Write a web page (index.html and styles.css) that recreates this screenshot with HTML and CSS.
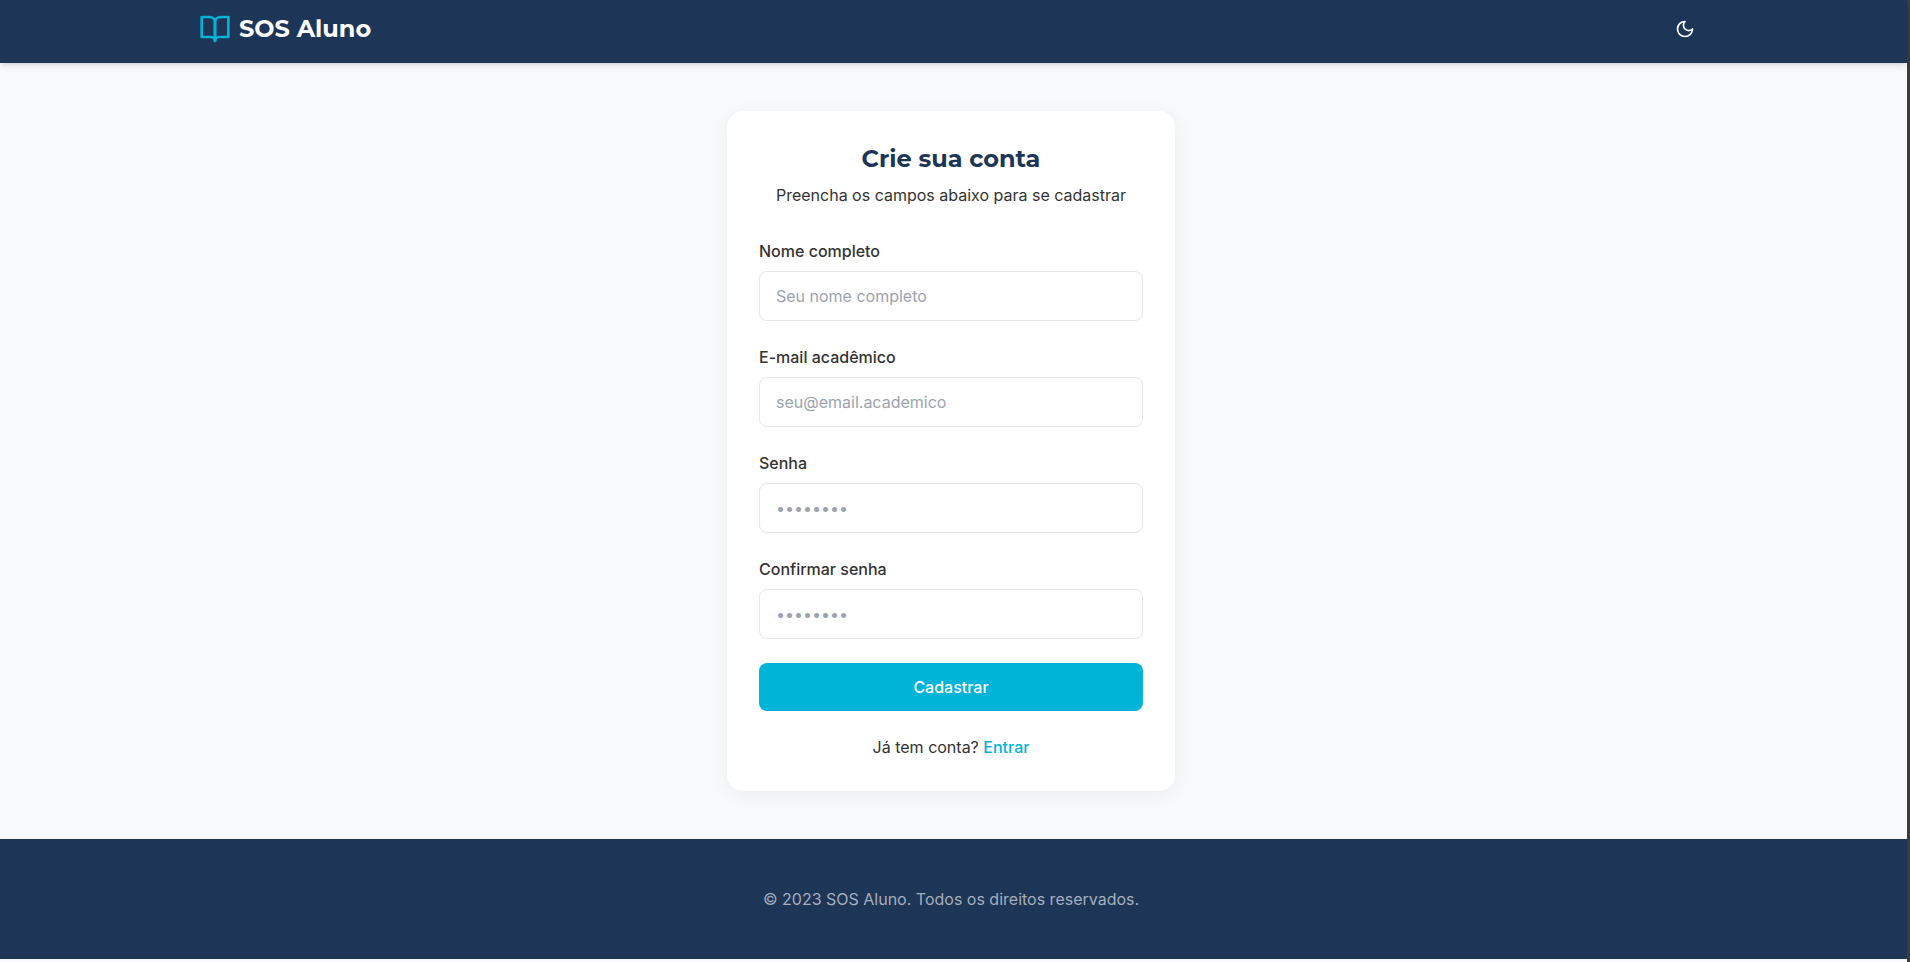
FILE: index.html
```html
<!DOCTYPE html>
<html lang="pt-BR">
<head>
<meta charset="utf-8">
<title>SOS Aluno</title>
<meta name="viewport" content="width=device-width, initial-scale=1">
<link rel="stylesheet" href="styles.css">
</head>
<body>
<div class="page">
  <header class="header">
    <div class="container">
      <a class="brand" href="#">
        <svg class="brand-icon" viewBox="0 0 24 24" fill="none" stroke="currentColor" stroke-width="2" stroke-linejoin="round" stroke-linecap="round" aria-hidden="true">
          <path d="M2 3h6a4 4 0 0 1 4 4v14a3 3 0 0 0-3-3H2z"/>
          <path d="M22 3h-6a4 4 0 0 0-4 4v14a3 3 0 0 1 3-3h7z"/>
        </svg>
        <span>SOS Aluno</span>
      </a>
      <button class="theme-toggle" type="button" aria-label="Alternar tema">
        <svg class="theme-icon" viewBox="0 0 24 24" fill="none" stroke="currentColor" stroke-width="2" stroke-linecap="round" stroke-linejoin="round" aria-hidden="true">
          <path d="M12 3a6 6 0 0 0 9 9 9 9 0 1 1-9-9Z"/>
        </svg>
      </button>
    </div>
  </header>
  <main class="main">
    <section class="card">
      <h1 class="title">Crie sua conta</h1>
      <p class="subtitle">Preencha os campos abaixo para se cadastrar</p>
      <form class="form">
        <div class="field">
          <label for="name">Nome completo</label>
          <input id="name" type="text" placeholder="Seu nome completo">
        </div>
        <div class="field">
          <label for="email">E-mail acadêmico</label>
          <input id="email" type="email" placeholder="seu@email.academico">
        </div>
        <div class="field">
          <label for="password">Senha</label>
          <input id="password" type="password" placeholder="••••••••">
        </div>
        <div class="field">
          <label for="confirm">Confirmar senha</label>
          <input id="confirm" type="password" placeholder="••••••••">
        </div>
        <button class="submit" type="submit">Cadastrar</button>
      </form>
      <p class="signin">Já tem conta? <a href="#">Entrar</a></p>
    </section>
  </main>
  <footer class="footer">
    <p>© 2023 SOS Aluno. Todos os direitos reservados.</p>
  </footer>
</div>
</body>
</html>
```
FILE: styles.css
```css
*, *::before, *::after { box-sizing: border-box; }
h1, p { margin: 0; }

body {
  margin: 0;
  background: #f8f9fb;
  color: #333;
  font: 16px/24px Inter, "Noto Sans", sans-serif;
}

.page {
  display: flex;
  flex-direction: column;
  min-height: 100vh;
  padding-bottom: 3px;
  border-right: 3px solid #3b3b3b;
}

.header {
  position: relative;
  padding: 9px 5px 14px 0;
  background: #1d3557;
  color: #fff;
  box-shadow: 0 4px 6px -1px rgba(0, 0, 0, .1), 0 2px 4px -2px rgba(0, 0, 0, .1);
}

.container {
  display: flex;
  align-items: center;
  justify-content: space-between;
  max-width: 1536px;
  height: 40px;
  margin: 0 auto;
  padding: 0 16px;
}

.brand {
  display: flex;
  align-items: center;
  gap: 8px;
  color: #fff;
  font: 700 24px/32px Montserrat, Inter, sans-serif;
  text-decoration: none;
}
.brand-icon { width: 32px; height: 32px; color: #00b4d8; }

.theme-toggle {
  display: flex;
  padding: 8px;
  border: 0;
  border-radius: 50%;
  background: none;
  color: inherit;
  cursor: pointer;
}
.theme-icon { width: 20px; height: 20px; }

.main {
  display: flex;
  flex: 1;
  align-items: center;
  justify-content: center;
  padding: 48px 21px 48px 16px;
}

.card {
  width: 100%;
  max-width: 448px;
  padding: 32px;
  border-radius: 16px;
  background: #fff;
  box-shadow: 0 4px 20px rgba(0, 0, 0, .05);
}

.title {
  margin-bottom: 8px;
  color: #1d3557;
  font: 700 24px/32px Montserrat, Inter, sans-serif;
  text-align: center;
}
.subtitle { margin-bottom: 32px; text-align: center; }

.form { display: grid; gap: 24px; }
.field { display: grid; gap: 8px; }
.field label { font-weight: 500; }
.field input {
  width: 100%;
  padding: 12px 16px;
  border: 1px solid #e5e7eb;
  border-radius: 8px;
  background: #fff;
  color: #333;
  font: inherit;
  height: 50px;
}
.field input::placeholder { color: #9ca3af; opacity: 1; }

.submit {
  padding: 12px 16px;
  border: 0;
  border-radius: 8px;
  background: #00b4d8;
  color: #fff;
  font: inherit;
  font-weight: 500;
  cursor: pointer;
}

.signin { margin-top: 24px; text-align: center; }
.signin a { color: #00b4d8; font-weight: 500; text-decoration: none; }

.footer {
  padding: 48px 21px 48px 16px;
  background: #1d3557;
  color: #a5aebc;
  text-align: center;
}
```
